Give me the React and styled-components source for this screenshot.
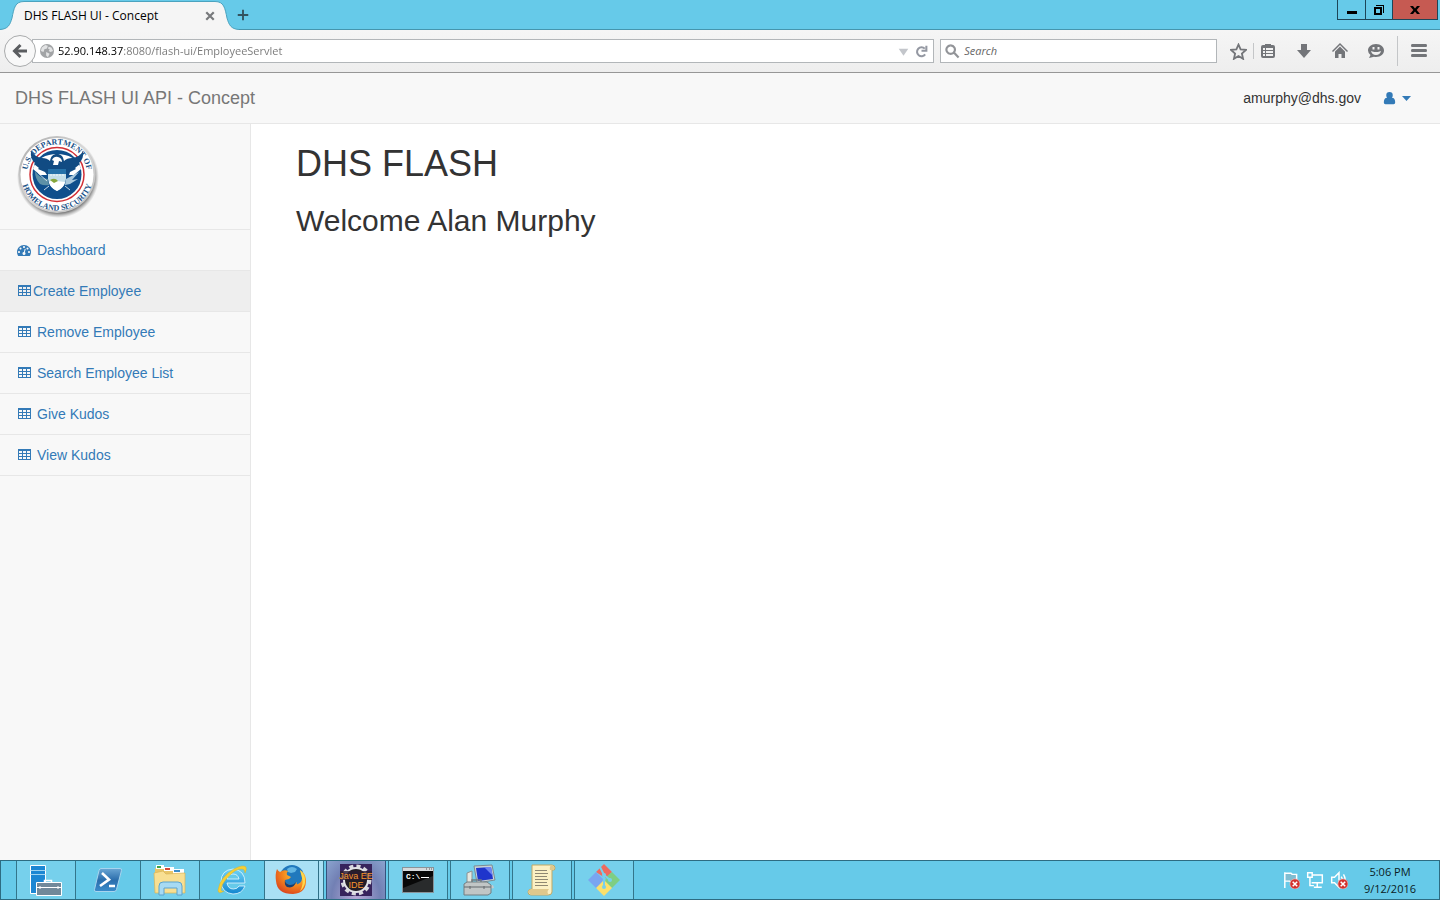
import React from 'react';
import styled, { createGlobalStyle, css } from 'styled-components';

const ui = '"Open Sans", "Noto Sans", sans-serif';
const sans = '"Liberation Sans", Arial, sans-serif';

const Global = createGlobalStyle`
  *, *::before, *::after { box-sizing: border-box; }
  body { margin: 0; background: #fff; font-family: ${sans}; font-size: 14px; line-height: 20px; color: #333; }
  button, input { font: inherit; color: inherit; margin: 0; padding: 0; border: 0; background: none; }
  svg { display: block; flex: none; }
`;

const Screen = styled.div`
  display: flex;
  flex-direction: column;
  min-height: 100vh;
`;

/* Browser window frame */
const TitleBar = styled.div`
  display: flex;
  height: 30px;
  background: linear-gradient(#66cae9 29px, #4595ad 29px);
`;
const Tab = styled.div`
  display: flex;
  height: 30px;
`;
const TabBody = styled.div`
  display: flex;
  align-items: center;
  width: 191px;
  height: 29px;
  margin-top: 1px;
  background: #f5f5f5;
  border-top: 1px solid #4ba3bf;
  color: #000;
  font: 12px/16px ${ui};
`;
const TabTitle = styled.span`
  flex: 1;
  white-space: nowrap;
`;
const IconButton = styled.button`
  display: flex;
  align-items: center;
  justify-content: center;
  flex: none;
  width: ${(p) => p.$w || 16}px;
  height: ${(p) => p.$h || 16}px;
`;
const WindowControls = styled.div`
  display: flex;
  height: 20px;
  margin: 0 2px 0 auto;
  border: 1px solid #1d4658;
  border-top: 0;
`;
const WindowButton = styled(IconButton)`
  width: ${(p) => p.$w}px;
  height: 19px;
  background: ${(p) => (p.$close ? '#c65a52' : 'transparent')};
  & + & { border-left: 1px solid #1d4658; }
`;

const Toolbar = styled.div`
  display: flex;
  align-items: center;
  height: 43px;
  padding: 0 13px 0 4px;
  background: linear-gradient(#f5f5f5, #eeeeee);
  border-bottom: 1px solid #979797;
`;
const BackButton = styled.button`
  display: flex;
  align-items: center;
  justify-content: center;
  flex: none;
  z-index: 1;
  width: 32px;
  height: 32px;
  border: 1px solid #a9abac;
  border-radius: 50%;
  background: #f8f8f8;
`;
const Field = styled.label`
  display: flex;
  align-items: center;
  flex: ${(p) => p.$grow} 1 0;
  min-width: 0;
  height: 24px;
  gap: 4px;
  padding: 0 4px;
  background: #fff;
  border: 1px solid #b2b6b9;
`;
const AddressField = styled(Field)`
  margin: 0 6px 0 -4px;
  padding-left: 7px;
`;
const FieldInput = styled.input`
  flex: 1;
  min-width: 0;
  height: 20px;
  font: 11px/20px ${ui};
  outline: none;
  ${(p) =>
    p.$address &&
    css`
      color: transparent;
      background: linear-gradient(90deg, #000 66px, #777 66px);
      background-clip: text;
      -webkit-background-clip: text;
    `}
  &::placeholder { color: #666; font-style: italic; opacity: 1; }
`;
const Tools = styled.div`
  display: flex;
  align-items: center;
  margin-left: 12px;
`;
const ToolGroup = styled.div`
  display: flex;
  gap: ${(p) => p.$gap || 0}px;
  padding: 0 ${(p) => p.$pad || 0}px;
`;
const Rule = styled.span`
  width: 1px;
  height: ${(p) => p.$h}px;
  background: #c4c6c8;
`;

/* Web page */
const Navbar = styled.header`
  display: flex;
  align-items: center;
  justify-content: space-between;
  height: 51px;
  padding: 0 29px 0 15px;
  background: #f8f8f8;
  border-bottom: 1px solid #e7e7e7;
`;
const Brand = styled.a`
  color: #777;
  font-size: 18px;
  line-height: 20px;
  text-decoration: none;
`;
const Account = styled.div`
  display: flex;
  align-items: center;
  gap: 22px;
`;
const UserMenu = styled.button`
  display: flex;
  align-items: center;
  gap: 6px;
`;
const Page = styled.div`
  display: flex;
  flex: 1;
`;
const Sidebar = styled.aside`
  flex: none;
  width: 251px;
  background: #f8f8f8;
  border-right: 1px solid #e7e7e7;
`;
const LogoArea = styled.div`
  height: 106px;
  padding: 8px 14px;
  border-bottom: 1px solid #e7e7e7;
`;
const NavItem = styled.a`
  display: flex;
  align-items: center;
  gap: ${(p) => (p.$active ? 2 : 6)}px;
  height: 41px;
  padding: 0 17px;
  background: ${(p) => (p.$active ? '#eeeeee' : 'transparent')};
  border-bottom: 1px solid #e7e7e7;
  color: #337ab7;
  text-decoration: none;
`;
const Content = styled.main`
  flex: 1;
  padding: 20px 45px;
`;
const Title = styled.h1`
  margin: 0 0 20px;
  font-size: 36px;
  font-weight: 400;
  line-height: 40px;
`;
const Subtitle = styled.h2`
  margin: 0;
  font-size: 30px;
  font-weight: 400;
  line-height: 33px;
`;

/* Desktop taskbar */
const Taskbar = styled.footer`
  display: flex;
  height: 40px;
  padding-left: 15px;
  background: #66cae9;
  border: 1px solid #2d6c82;
`;
const Apps = styled.div`
  display: flex;
  gap: 2px;
`;
const looks = {
  idle: css`border-color: transparent;`,
  open: css`background: #76d0ec; border-color: #33758b;`,
  stacked: css`background: linear-gradient(90deg, #a9e0f4 53px, #2f6f86 53px 54px, #a9e0f4 54px); border-color: #33758b;`,
  active: css`background: radial-gradient(ellipse at 50% 100%, #b8a9d6, #7280b4 60%, #8ba4cf); border-color: #35537d;`,
};
const AppButton = styled.button`
  display: flex;
  align-items: center;
  justify-content: center;
  width: 60px;
  height: 38px;
  border: solid;
  border-width: 0 1px;
  padding-right: ${(p) => (p.$look === 'stacked' ? 6 : 0)}px;
  ${(p) => looks[p.$look]}
`;
const Tray = styled.div`
  display: flex;
  align-items: center;
  gap: 6px;
  margin-left: auto;
  padding-right: 19px;
`;
const Clock = styled.time`
  display: flex;
  flex-direction: column;
  align-items: center;
  width: 60px;
  margin-left: 6px;
  color: #0b1c24;
  font: 11px/17px ${ui};
`;

const TabEdge = ({ right }) => (
  <svg width="24" height="30" viewBox="0 0 24 30" aria-hidden="true">
    <g transform={right ? 'translate(24 0) scale(-1 1)' : undefined}>
      <path d="M0 30V29.5C8 29 10 25 12 18C14 8 15 1.5 24 1.5V30Z" fill="#f5f5f5" />
      <path d="M0 29.5C8 29 10 25 12 18C14 8 15 1.5 24 1.5" fill="none" stroke="#4ba3bf" />
    </g>
  </svg>
);

const TableIcon = () => (
  <svg width="14" height="14" viewBox="0 0 14 14" aria-hidden="true">
    <path fill="#337ab7" fillRule="evenodd" d="M1 1h13v11H1zM2 3v2h3V3zM6 3v2h3V3zM10 3v2h3V3zM2 6v2h3V6zM6 6v2h3V6zM10 6v2h3V6zM2 9v2h3V9zM6 9v2h3V9zM10 9v2h3V9z" />
  </svg>
);

const DashboardIcon = () => (
  <svg width="14" height="14" viewBox="0 0 1792 1792" aria-hidden="true">
    <path fill="#337ab7" d="M384 1152q0-53-37.5-90.5t-90.5-37.5-90.5 37.5-37.5 90.5 37.5 90.5 90.5 37.5 90.5-37.5 37.5-90.5zm192-448q0-53-37.5-90.5t-90.5-37.5-90.5 37.5-37.5 90.5 37.5 90.5 90.5 37.5 90.5-37.5 37.5-90.5zm428 481l101-382q6-26-7.5-48.5t-38.5-29.5-48 6.5-30 39.5l-101 382q-60 5-107 43.5t-63 98.5q-20 77 20 146t117 89 146-20 89-117q16-60-6-117t-72-91zm660-33q0-53-37.5-90.5t-90.5-37.5-90.5 37.5-37.5 90.5 37.5 90.5 90.5 37.5 90.5-37.5 37.5-90.5zm-640-640q0-53-37.5-90.5t-90.5-37.5-90.5 37.5-37.5 90.5 37.5 90.5 90.5 37.5 90.5-37.5 37.5-90.5zm448 192q0-53-37.5-90.5t-90.5-37.5-90.5 37.5-37.5 90.5 37.5 90.5 90.5 37.5 90.5-37.5 37.5-90.5zm320 448q0 261-141 483-19 29-54 29h-1402q-35 0-54-29-141-221-141-483 0-182 71-348t191-286 286-191 348-71 348 71 286 191 191 286 71 348z" />
  </svg>
);

const Seal = () => (
  <svg width="88" height="90" viewBox="0 0 88 90" role="img" aria-label="U.S. Department of Homeland Security seal">
    <defs>
      <path id="arcTop" d="M43 72.500a30 30 0 1 1 .1 0" />
      <path id="arcBottom" d="M43 6.500a36 36 0 1 0 .1 0" />
      <radialGradient id="shade" cx="44" cy="45" r="41" gradientUnits="userSpaceOnUse">
        <stop offset=".86" stopColor="#666" />
        <stop offset="1" stopColor="#999" stopOpacity="0" />
      </radialGradient>
      <linearGradient id="rim" x1="0" y1="0" x2="1" y2="1">
        <stop offset="0" stopColor="#aaa" />
        <stop offset=".5" stopColor="#d8d8d8" />
        <stop offset="1" stopColor="#bbb" />
      </linearGradient>
    </defs>
    <circle cx="44" cy="45" r="41" fill="url(#shade)" />
    <circle cx="43" cy="42.500" r="38.500" fill="url(#rim)" />
    <circle cx="43" cy="42.500" r="36.500" fill="#fff" />
    <circle cx="43" cy="42.500" r="27" fill="#fff" stroke="#d22f35" strokeWidth="1.500" />
    <circle cx="43" cy="42.500" r="24.500" fill="#0f4f8c" />
    <path d="M19 37C24 17 62 17 67 37L60 43H26Z" fill="#fff" />
    <path d="M17 19q4 6 11 7 5 0 8 3c1-5 3-7 7-7s6 2 7 7q3-3 8-3 8-1 11-7 1 8-4 12l1 1-5 4 1 1-6 3-1 3H33l-2-3-7-3 1-1-5-4 1-1q-5-4-4-12Z" fill="#114b83" />
    <path d="M38 28q2-4 6-3 4 1 4 5l-3-1-1 4h-5l1-4Z" fill="#fff" />
    <path d="M34 38h18v9q-1 8-9 12-8-4-9-12Z" fill="#c5dfe9" />
    <path d="M34 37h18v5H34Z" fill="#2672a9" />
    <path d="M37 42v2m3-2v2m3-2v2m3-2v2m3-2v2" stroke="#fff" strokeWidth=".8" />
    <path d="M35 50q4-4 8-1l8 1q-1 6-8 9-7-3-8-9Z" fill="#fff" />
    <path d="M36 48q5-3 8 1l-4 2Z" fill="#86a63b" />
    <path d="M34 47q-9-1-13-8 0 8 5 13 4 2 9 1Z" fill="#5e91a7" />
    <path d="M52 47l13-7-7 8 6-1-8 5-5 1Z" fill="#a9c8dc" />
    <path d="M35 54l-5 4m21-4 5 4M24 41l9 8" stroke="#dce9f2" strokeWidth=".9" />
    <g fill="#174f86" fontFamily="Liberation Serif, serif" fontWeight="700" fontSize="8" textAnchor="middle">
      <text><textPath href="#arcTop" startOffset="50%">U.S. DEPARTMENT OF</textPath></text>
      <text><textPath href="#arcBottom" startOffset="50%">HOMELAND SECURITY</textPath></text>
    </g>
  </svg>
);

const Glyph = ({ d, size = 16, color = '#737579', stroke, width = 2, children }) => (
  <svg width={size} height={size} viewBox="0 0 16 16" aria-hidden="true">
    {d && <path d={d} fill={stroke ? 'none' : color} fillRule="evenodd" stroke={stroke ? color : 'none'} strokeWidth={width} />}
    {children}
  </svg>
);

const Globe = () => (
  <Glyph size={14}>
    <circle cx="8" cy="8" r="8" fill="#a2a4a6" />
    <path d="M2 4l4-3 3 1-1 3-3 1-1 3-3-1ZM10 3l3 1 2 4-3 1-2-1 1-2-2-1ZM7 9l4 2-2 4-2-2Z" fill="#e2e3e4" />
  </Glyph>
);

const Badge = () => (
  <>
    <circle cx="11.500" cy="11.500" r="4.500" fill="#d3322e" stroke="#f0c0bd" strokeWidth=".6" />
    <path d="M9.500 9.500l4 4m0-4-4 4" stroke="#fff" strokeWidth="1.400" />
  </>
);

const ServerManager = () => (
  <svg width="34" height="34" viewBox="0 0 34 34" aria-hidden="true">
    <path d="M1.500 2.500h15v28h-15Z" fill="#1c87d3" stroke="#fff" />
    <path d="M1.500 7.500h15M1.500 11.500h15" stroke="#9fd3f0" />
    <path d="M15.500 20v-2.500h7V20" fill="none" stroke="#fff" strokeWidth="1.500" />
    <path d="M7.500 19.500h25v13h-25Z" fill="#71899a" stroke="#fff" />
    <path d="M8 24.500h24M11 23v3m18-3v3" stroke="#fff" />
  </svg>
);
const PowerShell = () => (
  <svg width="30" height="26" viewBox="0 0 30 26" aria-hidden="true">
    <defs><linearGradient id="ps" x2="0" y2="1"><stop stopColor="#6aa6d4" /><stop offset=".5" stopColor="#2b6eac" /><stop offset="1" stopColor="#3a8ccb" /></linearGradient></defs>
    <path d="M8 1.500h19q2 0 1.500 2l-5 19q-.5 2-2.500 2H3q-2 0-1.500-2l4.500-19q.5-2 2-2Z" fill="url(#ps)" stroke="#a7d4ee" />
    <path d="M9 6l7 6.500-9 6.500M16 19h6" fill="none" stroke="#fff" strokeWidth="2.600" />
  </svg>
);
const Explorer = () => (
  <svg width="34" height="32" viewBox="0 0 34 32" aria-hidden="true">
    <path d="M2 4h8l2 3h9l2 2h9v20H2Z" fill="#e9c568" />
    <path d="M3 1h8v4H3Z" fill="#fff" /><path d="M4 2h4v2H4Z" fill="#3da347" />
    <path d="M11 3h10v4H11Z" fill="#fff" /><path d="M12 4h5v2h-5Z" fill="#d34837" />
    <path d="M20 5h11v5H20Z" fill="#fff" /><path d="M21 6h6v2h-6Z" fill="#3d8fc9" />
    <path d="M1 9l9-2 3 3 19-1v20H2Z" fill="#f8df92" stroke="#d9b556" strokeWidth=".7" />
    <path d="M6 31v-9q0-4 4-4h15q4 0 4 4v9h-5v-7H11v7Z" fill="#a7daf3" stroke="#5ca3ce" />
  </svg>
);
const InternetExplorer = () => (
  <svg width="32" height="32" viewBox="0 0 32 32" aria-hidden="true">
    <defs><linearGradient id="ie" x2="0" y2="1"><stop stopColor="#6fd4f8" /><stop offset="1" stopColor="#1286cf" /></linearGradient></defs>
    <path d="M29 19H11q1 6 6.500 6 4 0 5.500-3h6q-3 8-12 8-11-1-12-12 0-12 12-13 12 1 12 14ZM11 15h12q-1-5-6-5t-6 5Z" fill="url(#ie)" stroke="#e3f7ff" strokeWidth=".8" fillRule="evenodd" />
    <path d="M8 27q-6 4-6-1Q4 13 18 5q9-5 12-2 1 2-1 6 0-4-3-4Q20 4 11 14 5 21 5 26q1 2 3 1Z" fill="#f6cf35" stroke="#dfad16" strokeWidth=".4" />
  </svg>
);
const Firefox = () => (
  <svg width="32" height="32" viewBox="0 0 32 32" aria-hidden="true">
    <defs><radialGradient id="fx" cx=".7" cy=".2" r=".9"><stop stopColor="#ffd23e" /><stop offset=".5" stopColor="#f58a1f" /><stop offset="1" stopColor="#d83d1c" /></radialGradient></defs>
    <circle cx="17" cy="13" r="12" fill="#2179bd" />
    <path d="M12 5q5-4 10 0l-2 3-4 1-3-1Z" fill="#63b6e3" />
    <path d="M2 5q1 2 3 3 4-3 8-1-2 2-1 4l4 2-2 2-4 1q0 4 5 5 4 1 7-3-1 3 1 2 5-2 4-9l-2-5q5 3 6 9 1 14-13 15Q2 30 1 17 0 10 2 5Z" fill="url(#fx)" />
    <path d="M10 16q0 4 5 5 4 0 6-3-2 7-9 5-3-2-2-7Z" fill="#163f73" />
    <path d="M25 6q6 5 5 13-1 5-5 8 4-7 2-13Z" fill="#ffd74c" />
  </svg>
);
const JavaEE = () => (
  <svg width="34" height="34" viewBox="0 0 34 34" role="img" aria-label="Java EE IDE">
    <path d="M1 1h32v32H1Z" fill="#37235c" />
    <circle cx="17" cy="17" r="13.500" fill="none" stroke="#d9d9df" strokeWidth="4" strokeDasharray="4 3.070" />
    <circle cx="17" cy="17" r="12" fill="#231c26" stroke="#e1e1e6" strokeWidth="2" />
    <g fill="#f6932e" fontFamily="Liberation Sans, sans-serif" fontSize="9" textAnchor="middle">
      <rect x="1" y="8" width="32" height="9" fill="#2b1c30" opacity=".8" />
      <text x="17" y="16">Java EE</text>
      <text x="17" y="25">IDE</text>
    </g>
  </svg>
);
const Terminal = () => (
  <svg width="32" height="28" viewBox="0 0 32 28" aria-hidden="true">
    <path d="M.5 1.500h31v25H.5Z" fill="#080808" stroke="#899399" />
    <path d="M1 2h30v3H1Z" fill="#d6d9db" />
    <path d="M24 3h1m2 0h1m1 0h1" stroke="#555" />
    <path d="M1 22L31 10v16H1Z" fill="#292b2c" />
    <text x="4" y="13" fill="#fff" fontFamily="Liberation Mono, monospace" fontWeight="700" fontSize="8">C:\</text>
    <path d="M19 11.500h8" stroke="#fff" />
  </svg>
);
const ComputerTools = () => (
  <svg width="34" height="32" viewBox="0 0 34 32" aria-hidden="true">
    <path d="M4 9l5-2v13H4Z" fill="#e6e7df" stroke="#8a9294" />
    <path d="M11 2l18-1 3 15-18 3Z" fill="#c9d2d7" stroke="#7c8b93" />
    <path d="M13 4l15-1 2 12-15 2Z" fill="#1f35cc" /><path d="M21 3l7 0 2 9Z" fill="#6d83f2" />
    <path d="M21 18l3 4 6-1 1 3-9 2" fill="#c4ccd0" />
    <path d="M9 19v-3h9v3" fill="none" stroke="#747c80" strokeWidth="1.500" />
    <path d="M1 20l3-2h20l4 3v8l-3 2H1Z" fill="#c1c6c6" stroke="#737e82" />
    <path d="M1 23h27M7 22v3m14-3v3" stroke="#62696c" />
  </svg>
);
const Script = () => (
  <svg width="30" height="32" viewBox="0 0 30 32" aria-hidden="true">
    <path d="M5 1h20q3 0 3 3t-3 2v22q0 3-4 3H4q-3 0-3-3t4-3Z" fill="#fbf0c4" stroke="#c1a865" />
    <path d="M25 1q-3 1-2 5h3q3-3-1-5ZM1 28q1-3 4-3h17q-3 3 0 6H4Z" fill="#dfc88c" />
    <path d="M8 6.500h12M8 9.500h13M8 12.500h12M8 15.500h13M8 18.500h12M8 21.500h13" stroke="#8f8872" />
  </svg>
);
const GitIcon = () => (
  <svg width="34" height="34" viewBox="0 0 34 34" aria-hidden="true">
    <path d="M17 1l8 8-6 6-4-2-6-4Z" fill="#ee6a5e" />
    <path d="M9 9l7 7-1 6-5 4-9-9Z" fill="#79a5f0" />
    <path d="M25 9l8 8-8 8-7-6 1-5Z" fill="#7ece83" />
    <path d="M16 18l2 0 7 7-8 8-8-8Z" fill="#fbe06c" />
    <path d="M13 4l4 8v12M17 12l6 5" fill="none" stroke="#76d0ec" strokeWidth="2" />
    <circle cx="17" cy="12" r="2" fill="#76d0ec" /><circle cx="17" cy="24" r="2" fill="#76d0ec" /><circle cx="23" cy="17" r="2" fill="#76d0ec" />
  </svg>
);

const nav = [
  { label: 'Dashboard', icon: DashboardIcon },
  { label: 'Create Employee', icon: TableIcon, active: true },
  { label: 'Remove Employee', icon: TableIcon },
  { label: 'Search Employee List', icon: TableIcon },
  { label: 'Give Kudos', icon: TableIcon },
  { label: 'View Kudos', icon: TableIcon },
];

const apps = [
  { label: 'Server Manager', icon: ServerManager, look: 'open' },
  { label: 'PowerShell', icon: PowerShell, look: 'idle' },
  { label: 'File Explorer', icon: Explorer, look: 'open' },
  { label: 'Internet Explorer', icon: InternetExplorer, look: 'idle' },
  { label: 'Firefox', icon: Firefox, look: 'stacked' },
  { label: 'Eclipse', icon: JavaEE, look: 'active' },
  { label: 'Command Prompt', icon: Terminal, look: 'open' },
  { label: 'Computer Management', icon: ComputerTools, look: 'open' },
  { label: 'Script', icon: Script, look: 'open' },
  { label: 'Git', icon: GitIcon, look: 'open' },
];

export default function App() {
  return (
    <Screen>
      <Global />
      <TitleBar>
        <Tab>
          <TabEdge />
          <TabBody>
            <TabTitle>DHS FLASH UI - Concept</TabTitle>
            <IconButton aria-label="Close tab" $w={10}>
              <Glyph size={10} stroke color="#77797c" d="M2 2l12 12M14 2L2 14" width={3.5} />
            </IconButton>
          </TabBody>
          <TabEdge right />
        </Tab>
        <IconButton aria-label="New tab" $w={8} $h={30}>
          <Glyph size={12} stroke color="#33535f" d="M8 1v14M1 8h14" width={2.5} />
        </IconButton>
        <WindowControls>
          <WindowButton aria-label="Minimize" $w={27}>
            <Glyph size={16} color="#000" d="M3 9h10v3H3Z" />
          </WindowButton>
          <WindowButton aria-label="Restore" $w={27}>
            <Glyph size={16} color="#000" d="M3 5h8v8H3ZM5 7v4h4V7ZM5 3h8v8h-1V4H5Z" />
          </WindowButton>
          <WindowButton aria-label="Close" $w={45} $close>
            <Glyph size={16} color="#000" d="M3 4h3l2 2.500 2-2.500h3l-3.300 4 3.300 4h-3l-2-2.500-2 2.500H3l3.300-4Z" />
          </WindowButton>
        </WindowControls>
      </TitleBar>

      <Toolbar>
        <BackButton aria-label="Back">
          <Glyph size={16} stroke color="#5b5d60" d="M15 8H3M8.500 2L2.500 8l6 6" width={3} />
        </BackButton>
        <AddressField as="div" $grow={890}>
          <Globe />
          <FieldInput $address aria-label="Address" defaultValue="52.90.148.37:8080/flash-ui/EmployeeServlet" />
          <IconButton aria-label="Show history" $w={12}>
            <Glyph size={11} color="#c3c6cb" d="M1 4h14L8 14Z" />
          </IconButton>
          <IconButton aria-label="Reload">
            <Glyph size={13} stroke color="#9498a2" d="M12.500 11.500A5.500 5.500 0 1 1 12 4.500M14 1v6H8" width={2.5} />
          </IconButton>
        </AddressField>
        <Field $grow={267}>
          <Glyph size={15} color="#929498" stroke d="M6 1.500a4.500 4.500 0 1 0 .1 0M9.500 9l5 5.500" width={2.3} />
          <FieldInput aria-label="Search" placeholder="Search" />
        </Field>
        <Tools>
          <ToolGroup>
            <IconButton aria-label="Bookmark" $w={18}>
              <Glyph size={17} stroke d="M8 1.500l2 4.500 5 .5-3.800 3.400 1.100 5L8 12.300l-4.300 2.600 1.100-5L1 6.500l5-.5Z" width={1.7} />
            </IconButton>
          </ToolGroup>
          <ToolGroup $pad={6}><Rule $h={16} /></ToolGroup>
          <ToolGroup $gap={20}>
            <IconButton aria-label="Bookmarks menu">
              <Glyph d="M5 2V1h6v1h2q2 0 2 2v9q0 2-2 2H3q-2 0-2-2V4q0-2 2-2ZM3 5v2h2V5ZM6 5v2h7V5ZM3 8v2h2V8ZM6 8v2h7V8ZM3 11v2h2v-2ZM6 11v2h7v-2Z" />
            </IconButton>
            <IconButton aria-label="Downloads">
              <Glyph d="M5 1h6v6h4l-7 8-7-8h4Z" />
            </IconButton>
            <IconButton aria-label="Home">
              <Glyph d="M8 0l8 8-1 1-7-7-7 7-1-1ZM8 3.500l5 5V15h-3.500v-4h-3v4H3V8.500Z" />
            </IconButton>
            <IconButton aria-label="Chat">
              <Glyph d="M8 1c5 0 8 3 8 6.500S13 14 8 14q-1 0-2-.3L1 15l1.500-3Q0 10 0 7.500C0 4 3 1 8 1ZM4.500 4v2.500h2V4ZM9.500 4v2.500h2V4ZM3 8q1 4 5 4t5-4l-1.500.5q-3.500 1-7 0Z" />
            </IconButton>
          </ToolGroup>
          <ToolGroup $pad={13}><Rule $h={30} /></ToolGroup>
          <IconButton aria-label="Open menu">
            <Glyph d="M1 1h14q1 0 1 1.500T15 4H1Q0 4 0 2.500T1 1ZM1 6h14q1 0 1 1.500T15 9H1Q0 9 0 7.500T1 6ZM1 11h14q1 0 1 1.500t-1 1.500H1q-1 0-1-1.500T1 11Z" />
          </IconButton>
        </Tools>
      </Toolbar>

      <Navbar>
        <Brand href="#">DHS FLASH UI API - Concept</Brand>
        <Account>
          <span>amurphy@dhs.gov</span>
          <UserMenu aria-label="User menu">
            <Glyph size={13} color="#337ab7" d="M8 0q4 0 4 4 0 2-1 3 4 0 4 6 0 2-2 2H3q-2 0-2-2 0-6 4-6-1-1-1-3 0-4 4-4Z" />
            <svg width="9" height="5" viewBox="0 0 9 5" aria-hidden="true"><path d="M0 0h9L4.500 5Z" fill="#337ab7" /></svg>
          </UserMenu>
        </Account>
      </Navbar>

      <Page>
        <Sidebar>
          <LogoArea><Seal /></LogoArea>
          <nav>
            {nav.map(({ label, icon: Icon, active }) => (
              <NavItem key={label} href="#" $active={active}>
                <Icon />
                {label}
              </NavItem>
            ))}
          </nav>
        </Sidebar>
        <Content>
          <Title>DHS FLASH</Title>
          <Subtitle>Welcome Alan Murphy</Subtitle>
        </Content>
      </Page>

      <Taskbar>
        <Apps>
          {apps.map(({ label, icon: Icon, look }) => (
            <AppButton key={label} aria-label={label} $look={look}><Icon /></AppButton>
          ))}
        </Apps>
        <Tray>
          <IconButton aria-label="Action Center" $w={18}>
            <Glyph size={18}>
              <path d="M2.500 1v14M3 2h5l1 1h4v7H8L7 9H3" fill="#7fbdd2" stroke="#fff" strokeWidth="1.300" />
              <Badge />
            </Glyph>
          </IconButton>
          <IconButton aria-label="Network" $w={18}>
            <Glyph size={18}>
              <path d="M6 3.500h8.500v7H5M10 11v3M7 14.500h7M1.500 1.500h4v4h-4ZM3.500 6v7H7" fill="none" stroke="#fff" strokeWidth="1.300" />
            </Glyph>
          </IconButton>
          <IconButton aria-label="Volume" $w={18}>
            <Glyph size={18}>
              <path d="M1.500 5.500H4l4-4v13l-4-4H1.500ZM10 5q2 3 0 6M12 3q3 5 0 9" fill="none" stroke="#fff" strokeWidth="1.300" />
              <Badge />
            </Glyph>
          </IconButton>
          <Clock>
            <span>5:06 PM</span>
            <span>9/12/2016</span>
          </Clock>
        </Tray>
      </Taskbar>
    </Screen>
  );
}
